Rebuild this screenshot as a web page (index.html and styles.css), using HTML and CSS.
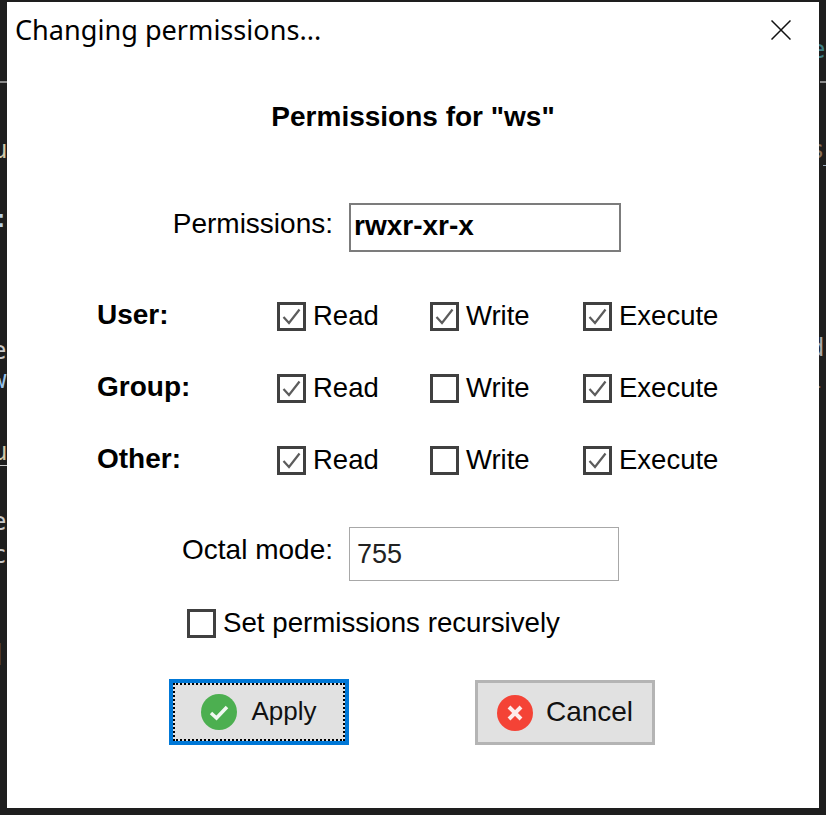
FILE: index.html
```html
<!DOCTYPE html>
<html lang="en">
<head>
<meta charset="utf-8">
<title>Changing permissions...</title>
<link rel="stylesheet" href="styles.css">
</head>
<body>
<div class="desk">
  <div class="backdrop" aria-hidden="true">
    <span class="line l1"></span>
    <span class="line l2"></span>
    <span class="line l3"></span>
    <span class="frag f1">u</span>
    <span class="frag f2">:</span>
    <span class="frag f3">e</span>
    <span class="frag f4">w</span>
    <span class="frag f5">u</span>
    <span class="frag f6">e</span>
    <span class="frag f7">c</span>
    <span class="frag f8">]</span>
    <span class="frag f9">e</span>
    <span class="frag f10">s</span>
    <span class="frag f11">d</span>
    <span class="frag f12">l</span>
  </div>
  <div class="dialog">
    <header class="titlebar">
      <span class="title">Changing permissions...</span>
      <svg class="close" width="20" height="20" viewBox="0 0 20 20"><path d="M.5.5l19 19M19.500.5l-19 19" fill="none" stroke="#111" stroke-width="1.500"/></svg>
    </header>
    <h1 class="heading">Permissions for "ws"</h1>
    <div class="field field-perm">
      <span class="field-label">Permissions:</span>
      <div class="input input-strong">rwxr-xr-x</div>
    </div>
    <div class="matrix">
      <span class="who">User:</span>
      <div class="check"><span class="box"><svg viewBox="0 0 23 23"><path d="M3.500 12l5.500 6L19.500 4.500"/></svg></span>Read</div>
      <div class="check"><span class="box"><svg viewBox="0 0 23 23"><path d="M3.500 12l5.500 6L19.500 4.500"/></svg></span>Write</div>
      <div class="check"><span class="box"><svg viewBox="0 0 23 23"><path d="M3.500 12l5.500 6L19.500 4.500"/></svg></span>Execute</div>
      <span class="who">Group:</span>
      <div class="check"><span class="box"><svg viewBox="0 0 23 23"><path d="M3.500 12l5.500 6L19.500 4.500"/></svg></span>Read</div>
      <div class="check"><span class="box"></span>Write</div>
      <div class="check"><span class="box"><svg viewBox="0 0 23 23"><path d="M3.500 12l5.500 6L19.500 4.500"/></svg></span>Execute</div>
      <span class="who">Other:</span>
      <div class="check"><span class="box"><svg viewBox="0 0 23 23"><path d="M3.500 12l5.500 6L19.500 4.500"/></svg></span>Read</div>
      <div class="check"><span class="box"></span>Write</div>
      <div class="check"><span class="box"><svg viewBox="0 0 23 23"><path d="M3.500 12l5.500 6L19.500 4.500"/></svg></span>Execute</div>
    </div>
    <div class="field field-octal">
      <span class="field-label">Octal mode:</span>
      <div class="input input-plain">755</div>
    </div>
    <div class="check recursive"><span class="box"></span>Set permissions recursively</div>
    <div class="actions">
      <button class="btn btn-primary" type="button">
        <span class="focus-ring">
          <svg class="btn-icon" viewBox="0 0 36 36"><circle cx="18" cy="18" r="18" fill="#4caf50"/><path d="M10 19l5.500 5L26 13" fill="none" stroke="#f1f8f1" stroke-width="3.500"/></svg>
          <span>Apply</span>
        </span>
      </button>
      <button class="btn btn-cancel" type="button">
        <svg class="btn-icon" viewBox="0 0 36 36"><circle cx="18" cy="18" r="18" fill="#f44336"/><path d="M12 12l12 12M24 12L12 24" fill="none" stroke="#fdeceb" stroke-width="4"/></svg>
        <span>Cancel</span>
      </button>
    </div>
  </div>
</div>
</body>
</html>
```

FILE: styles.css
```css
* { box-sizing: border-box; }
html, body { margin: 0; padding: 0; }
body { background: #1e1e1e; }

.desk {
  position: relative;
  width: 826px;
  height: 815px;
  overflow: hidden;
  background: #1e1e1e;
  padding: 2px 7px 7px;
}

.backdrop { position: absolute; inset: 0; }
.line { position: absolute; height: 2px; background: #8a8a8a; }
.l1 { left: 0; top: 81px; width: 8px; }
.l2 { left: 820px; top: 81px; width: 6px; }
.l3 { left: 823px; top: 165px; width: 3px; background: #9ab; height: 1px; }
.frag {
  position: absolute;
  font: 24px/28px "DejaVu Sans Mono", monospace;
  color: #c8c8c8;
}
.f1 { left: -7px; top: 136px; color: #d0c8a8; }
.f2 { left: -6px; top: 205px; color: #b8d0e8; }
.f3 { left: -8px; top: 337px; }
.f4 { left: -8px; top: 366px; color: #9cc4e8; }
.f5 { left: -7px; top: 440px; color: #d0c8a8; border-bottom: 1px solid #c8c8c8; line-height: 25px; }
.f6 { left: -8px; top: 508px; }
.f7 { left: -8px; top: 541px; }
.f8 { left: -9px; top: 640px; color: #9cb4c8; }
.f9 { left: 811px; top: 36px; color: #3f7f85; }
.f10 { left: 810px; top: 136px; color: #8a7058; }
.f11 { left: 810px; top: 334px; color: #a8a8a8; }
.f12 { left: 808px; top: 366px; color: #806858; }

.dialog {
  position: relative;
  width: 812px;
  height: 806px;
  background: #fff;
  color: #000;
  font: 27.500px/32px "Liberation Sans", Arial, sans-serif;
}

.titlebar {
  height: 56px;
  padding: 0 28px 0 8px;
  display: flex;
  align-items: center;
  justify-content: space-between;
}
.title {
  font: 27.100px/34px "Noto Sans", "Open Sans", sans-serif;
}
.close { flex: none; }

.heading {
  margin: 43px 0 0;
  height: 32px;
  font: 700 28px/32px "Liberation Sans", Arial, sans-serif;
  text-align: center;
}

.field {
  display: grid;
  grid-template-columns: 326px auto;
  column-gap: 16px;
  align-items: center;
}
.field-perm { margin-top: 70px; }
.field-octal { margin-top: 31px; }
.field-label { text-align: right; margin-bottom: 8px; font-size: 28px; }

.input { padding-left: 3px; display: flex; align-items: center; }
.input-strong {
  width: 272px;
  height: 49px;
  border: 2px solid #7c7c7c;
  font-weight: 700;
  font-size: 28px;
  padding-bottom: 4px;
}
.input-plain {
  width: 270px;
  height: 54px;
  border: 1px solid #a8a8a8;
  padding-left: 7px;
  font-size: 27px;
  color: #222;
}

.matrix {
  margin-top: 28px;
  display: grid;
  grid-template-columns: 180px repeat(3, 153px);
  grid-auto-rows: 72px;
  padding-left: 90px;
  align-items: center;
}
.who {
  font-weight: 700;
  font-size: 28px;
  margin-bottom: 2px;
}

.check { display: flex; align-items: center; gap: 7px; }
.box {
  flex: none;
  width: 29px;
  height: 29px;
  border: 3px solid #404040;
  display: block;
  background: #fff;
}
.box svg { display: block; width: 23px; height: 23px; }
.box path { fill: none; stroke: #5c5c5c; stroke-width: 2.200; }

.recursive { margin: 26px 0 0 180px; font-size: 27.700px; }

.actions {
  margin: 40px 0 0 162px;
  display: flex;
  align-items: flex-end;
  gap: 126px;
}
.btn {
  width: 180px;
  background: #e1e1e1;
  color: #111;
  font: 27px/32px "Liberation Sans", Arial, sans-serif;
  padding: 0;
  margin: 0;
  display: flex;
  align-items: center;
  justify-content: center;
}
.btn-primary { height: 66px; border: 4px solid #0078d7; font-size: 26px; }
.btn-cancel { height: 65px; border: 3px solid #b4b4b4; gap: 13px; font-size: 28px; padding-bottom: 2px; }
.focus-ring {
  width: 100%;
  height: 100%;
  margin: 0;
  border: 2px dotted #000;
  display: flex;
  align-items: center;
  justify-content: center;
  gap: 14px;
  padding-bottom: 2px;
}
.btn-icon { width: 36px; height: 36px; flex: none; }
.btn-cancel .btn-icon { margin-top: 2px; }
.focus-ring .btn-icon { margin-top: 2px; }
```
